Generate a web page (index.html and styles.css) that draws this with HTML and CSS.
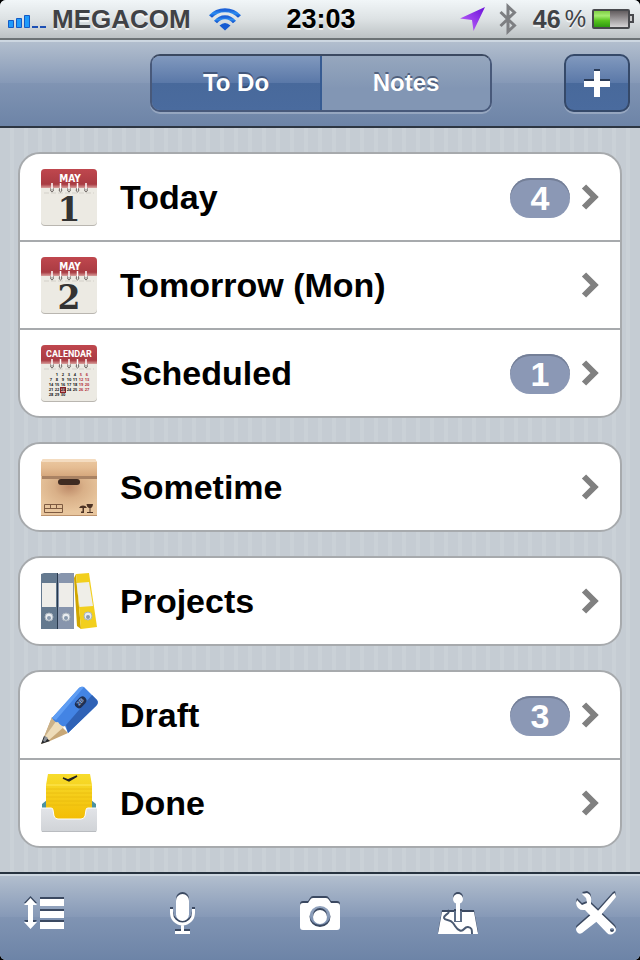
FILE: index.html
```html
<!DOCTYPE html>
<html lang="en">
<head>
<meta charset="utf-8">
<meta name="viewport" content="width=device-width, initial-scale=1">
<title>To Do</title>
<link rel="stylesheet" href="styles.css">
</head>
<body>
<svg class="defs" aria-hidden="true">
  <defs>
    <linearGradient id="red" x1="0" y1="0" x2="0" y2="1"><stop offset="0" stop-color="#c0474e"/><stop offset=".8" stop-color="#a93b42"/><stop offset="1" stop-color="#d9a09d"/></linearGradient>
    <linearGradient id="blue" x1="0" y1="0" x2="0" y2="1"><stop offset="0" stop-color="#1d62d8"/><stop offset=".5" stop-color="#2b8df2"/><stop offset="1" stop-color="#1558cf"/></linearGradient>
    <linearGradient id="purple" x1="1" y1="0" x2="0" y2="1"><stop offset="0" stop-color="#6a10d8"/><stop offset="1" stop-color="#c66cff"/></linearGradient>
    <linearGradient id="charge" x1="0" y1="0" x2="0" y2="1"><stop offset="0" stop-color="#7fcf45"/><stop offset=".3" stop-color="#a5ec70"/><stop offset=".6" stop-color="#58c41e"/><stop offset="1" stop-color="#2f9a10"/></linearGradient>
    <linearGradient id="empty" x1="0" y1="0" x2="0" y2="1"><stop offset="0" stop-color="#5c5658"/><stop offset="1" stop-color="#dcdadc"/></linearGradient>
    <radialGradient id="card" cx=".5" cy=".3" r=".6"><stop offset="0" stop-color="#bd8a68"/><stop offset=".45" stop-color="#d9b088"/><stop offset="1" stop-color="#e8c69e"/></radialGradient>
    <linearGradient id="flap" x1="0" y1="0" x2="0" y2="1"><stop offset="0" stop-color="#ecc9a2"/><stop offset=".5" stop-color="#e5bd93"/><stop offset="1" stop-color="#d6a87d"/></linearGradient>
    <linearGradient id="yellow" x1="0" y1="0" x2="0" y2="1"><stop offset="0" stop-color="#f7dc2c"/><stop offset="1" stop-color="#f3bd05"/></linearGradient>
    <linearGradient id="tray" x1="0" y1="0" x2="0" y2="1"><stop offset="0" stop-color="#e2e4e8"/><stop offset="1" stop-color="#d0d3d7"/></linearGradient>
    <g id="sheet">
      <rect x="1" y="1" width="56" height="57" rx="4" fill="#b9b6b0"/>
      <rect x="1" y="1" width="56" height="56" rx="4" fill="#eceae3"/>
      <path d="M1 20V5a4 4 0 0 1 4-4h48a4 4 0 0 1 4 4v15z" fill="url(#red)"/>
      <path d="M4 25h50" stroke="#d3d0c9" stroke-dasharray="5 2"/>
    </g>
    <g id="rings" fill="none">
      <g stroke="#6d6663"><path d="M11 20q-1 4 1 4t1-4M19.500 20q-1 4 1 4t1-4M28 20q-1 4 1 4t1-4M36.500 20q-1 4 1 4t1-4M45 20q-1 4 1 4t1-4"/></g>
      <path d="M12 15v6M20.500 15v6M29 15v6M37.500 15v6M46 15v6" stroke="#fff" stroke-width="1.500"/>
    </g>
  </defs>
</svg>
<div class="app">
  <div class="status">
    <div class="side">
      <svg class="signal" width="38" height="14" viewBox="0 0 38 14" role="img" aria-label="Signal"><g fill="#1f9bfb" stroke="#155ac4"><path d="M.5 5.500h5v7h-5zM8.500 3.500h5v9h-5zM16.500 .5h5v12h-5z"/></g><path d="M24 11h6v2h-6zM32 11h6v2h-6z" fill="#1c4fb4"/></svg>
      <span class="carrier">MEGACOM</span>
      <svg class="wifi" width="32" height="24" viewBox="0 0 32 24" role="img" aria-label="Wi-Fi"><g fill="none" stroke="url(#blue)" stroke-width="4"><path d="M1.500 9.500C9 1 23 1 30.500 9.500"/><path d="M6.500 15C12 8.500 20 8.500 25.500 15"/></g><path d="M10.500 18.500q5.500-5 11 0L16 23.500z" fill="#155bd2"/></svg>
    </div>
    <span class="time">23:03</span>
    <div class="side end">
      <svg width="26" height="26" viewBox="0 0 26 26" role="img" aria-label="Location"><path d="M25 1 13.500 25 12 14 0 12.500z" fill="url(#purple)"/></svg>
      <svg class="bluetooth" width="18" height="30" viewBox="0 0 18 30" role="img" aria-label="Bluetooth"><path d="M1.500 8 15.500 21.500 9 27.500V2.500l6.500 6L1.500 22" fill="none" stroke="#7d7f82" stroke-width="3"/></svg>
      <span class="percent"><span>46</span><span class="sign">%</span></span>
      <svg width="42" height="20" viewBox="0 0 42 20" role="img" aria-label="Battery"><rect x="1" y="1" width="36" height="18" rx="1" fill="url(#empty)" stroke="#48494d" stroke-width="2"/><path d="M2 2h16v16H2z" fill="url(#charge)"/><path d="M38 6h3v7h-3" fill="#ccc" stroke="#48494d" stroke-width="2"/></svg>
    </div>
  </div>
  <header class="nav">
    <div class="segments">
      <button class="segment active" type="button">To Do</button>
      <button class="segment" type="button">Notes</button>
    </div>
    <button class="add" type="button" aria-label="Add"><svg width="26" height="28" viewBox="0 0 26 28"><path d="M10 0h6v10h10v6H16v10h-6V16H0v-6h10z" fill="#2b3c58"/><path d="M10 2h6v10h10v6H16v10h-6V18H0v-6h10z" fill="#fff"/></svg></button>
  </header>
  <main class="lists">
    <div class="group">
      <a class="row" href="#today">
        <svg class="icon" viewBox="0 0 58 58" aria-hidden="true"><use href="#sheet"/><text class="month" x="30" y="14">MAY</text><use href="#rings"/><text class="day" x="29" y="53">1</text></svg>
        <span class="label">Today</span><span class="badge">4</span>
        <svg class="chevron" viewBox="0 0 18 26"><path d="M2 2.500 12.500 13 2 23.500" /></svg>
      </a>
      <a class="row" href="#tomorrow">
        <svg class="icon" viewBox="0 0 58 58" aria-hidden="true"><use href="#sheet"/><text class="month" x="30" y="14">MAY</text><use href="#rings"/><text class="day" x="29" y="53">2</text></svg>
        <span class="label">Tomorrow (Mon)</span>
        <svg class="chevron" viewBox="0 0 18 26"><path d="M2 2.500 12.500 13 2 23.500" /></svg>
      </a>
      <a class="row" href="#scheduled">
        <svg class="icon" viewBox="0 0 58 58" aria-hidden="true"><use href="#sheet"/><text class="month wide" x="29" y="13">CALENDAR</text><use href="#rings"/>
          <rect x="20.500" y="43.500" width="5" height="5" fill="#d99a9a" stroke="#8b2026"/>
          <g class="dates"><text x="17" y="32">1</text><text x="23" y="32">2</text><text x="29" y="32">3</text><text x="35" y="32">4</text><text class="off" x="41" y="32">5</text><text class="off" x="47" y="32">6</text>
          <text x="11" y="37">7</text><text x="17" y="37">8</text><text x="23" y="37">9</text><text x="29" y="37">10</text><text x="35" y="37">11</text><text class="off" x="41" y="37">12</text><text class="off" x="47" y="37">13</text>
          <text x="11" y="42">14</text><text x="17" y="42">15</text><text x="23" y="42">16</text><text x="29" y="42">17</text><text x="35" y="42">18</text><text class="off" x="41" y="42">19</text><text class="off" x="47" y="42">20</text>
          <text x="11" y="47">21</text><text x="17" y="47">22</text><text x="23" y="47">23</text><text x="29" y="47">24</text><text x="35" y="47">25</text><text class="off" x="41" y="47">26</text><text class="off" x="47" y="47">27</text>
          <text x="11" y="52">28</text><text x="17" y="52">29</text><text x="23" y="52">30</text></g></svg>
        <span class="label">Scheduled</span><span class="badge">1</span>
        <svg class="chevron" viewBox="0 0 18 26"><path d="M2 2.500 12.500 13 2 23.500" /></svg>
      </a>
    </div>
    <div class="group">
      <a class="row" href="#sometime">
        <svg class="icon" viewBox="0 0 58 58" aria-hidden="true"><path d="M1 16h56v42H1z" fill="url(#card)"/><path d="M1 57.500h56" stroke="#bd936e"/><path d="M3 1h52l2 3v14H1V4z" fill="url(#flap)"/><path d="M3 1h52l2 3H1z" fill="#f4dcc0"/><path d="M2 18h55v3H2z" fill="#a98263"/><rect x="18" y="21" width="22" height="6" rx="3" fill="#3f2b22"/><g fill="none" stroke="#7d5a41"><path d="M4.500 46.500h18v8h-18zM4.500 50.500h18M10.500 46.500v4M16.500 46.500v4"/></g><path d="M39 50a4.500 4.500 0 0 1 8 0zM42.500 49h1.500v6h-3v-1.500h1.500zM46.500 46h6.500q-.5 4-2.500 4v4h2.500v1h-6v-1h2.500v-4q-2.500 0-3-4z" fill="#4d3325"/></svg>
        <span class="label">Sometime</span>
        <svg class="chevron" viewBox="0 0 18 26"><path d="M2 2.500 12.500 13 2 23.500" /></svg>
      </a>
    </div>
    <div class="group">
      <a class="row" href="#projects">
        <svg class="icon" viewBox="0 0 58 58" aria-hidden="true"><path d="M1 2 4 1h13v56H1z" fill="#64798f"/><path d="M17 1h1v56h-1z" fill="#27384c"/><path d="M18 2 21 1h13v56H18z" fill="#8795ad"/><path d="M2 11h14v24H2zM19 11h14v24H19z" fill="#eeede9"/><path d="m34 6 2-4 5 55-4-3z" fill="#d1a600"/><path d="m36 2 13-1 8 54-16 2z" fill="#f2cf1d"/><path d="m36.500 11 12.500-1 4 24-13.500 1z" fill="#efeee8"/><g fill="#e8ecf0" stroke="#aab4be"><circle cx="9" cy="45" r="4"/><circle cx="26" cy="45" r="4"/><circle cx="48" cy="44" r="4"/></g><g fill="#8799ad"><circle cx="9" cy="46" r="2"/><circle cx="26" cy="46" r="2"/><circle cx="48" cy="45" r="2"/></g></svg>
        <span class="label">Projects</span>
        <svg class="chevron" viewBox="0 0 18 26"><path d="M2 2.500 12.500 13 2 23.500" /></svg>
      </a>
    </div>
    <div class="group">
      <a class="row" href="#draft">
        <svg class="icon" viewBox="0 0 58 58" aria-hidden="true"><path d="m12 31 16 16-18 8-9 3 3-7z" fill="#c8a878"/><path d="m12 31 6 4L5 53l-1-2z" fill="#cbb188"/><path d="m17 34 8 6L8 55l-4-3z" fill="#eedcb9"/><path d="m4 50 6 5-9 3z" fill="#25282e"/><path d="m5 50 3 2-3 4-2-1z" fill="#8a9098"/><path d="M39 2q2-2 5-1l13 13q2 3-1 6L28 47l-3-7q-4 1-7-4-3 1-6-4z" fill="#4384e4"/><path d="M39 2q2-2 5-1L16 34l-4-2z" fill="#5e9df3"/><path d="m52 9 5 5q2 3-1 6L28 47l-2-8z" fill="#2f62b6"/><rect x="34" y="12" width="13" height="8" rx="4" transform="rotate(-47 41 16)" fill="#203052"/><text class="grade" transform="translate(39 20) rotate(-47)">2B</text></svg>
        <span class="label">Draft</span><span class="badge">3</span>
        <svg class="chevron" viewBox="0 0 18 26"><path d="M2 2.500 12.500 13 2 23.500" /></svg>
      </a>
      <a class="row" href="#done">
        <svg class="icon" viewBox="0 0 58 58" aria-hidden="true"><path d="m2 30 5-4h44l5 4v8H2z" fill="#4c92a0"/><path d="M8 0h42l2 11v34H6V11z" fill="url(#yellow)"/><path d="M6 11h46" stroke="#ffe95a"/><path d="M6 15h46M6 19h46M6 23h46M6 27h46M6 31h46" stroke="#e5b60c" opacity=".6"/><path d="m23 4 5 2 9-4-8 5z" fill="#222" stroke="#222" stroke-width="1.500"/><path d="M1 34h10q2 0 2 2l1 6q1 3 4 3h23q3 0 4-3l1-6q0-2 2-2h9v22q0 2-2 2H3q-2 0-2-2z" fill="url(#tray)"/><path d="M1 34h10q2 0 2 2l1 6q1 3 4 3h23q3 0 4-3l1-6q0-2 2-2h9" fill="none" stroke="#fff"/><path d="M2 57.500h54" stroke="#b9bcc0"/></svg>
        <span class="label">Done</span>
        <svg class="chevron" viewBox="0 0 18 26"><path d="M2 2.500 12.500 13 2 23.500" /></svg>
      </a>
    </div>
  </main>
  <nav class="tools" aria-label="Tools">
    <button type="button" aria-label="Sort"><svg viewBox="0 0 44 44"><path d="M8.500 6 15 13h-4v17h4l-6.500 7L2 30h4V13H2zM18 7h24v7H18zM18 19h24v7H18zM18 30h24v7H18z"/></svg></button>
    <button type="button" aria-label="Record"><svg viewBox="0 0 44 44"><rect x="16" y="2" width="13" height="27" rx="6.500"/><path d="M11.500 17v4a11 11 0 0 0 22 0v-4M22.500 32v8" fill="none" stroke="#fff" stroke-width="3"/><path d="M15 39h15v3H15z"/></svg></button>
    <button type="button" aria-label="Camera"><svg viewBox="0 0 44 44"><path fill-rule="evenodd" d="M5 11h5l2-3q1-2 3-2h13q2 0 3 2l2 3h6q3 0 3 3v21q0 3-3 3H5q-3 0-3-3V14q0-3 3-3zm17 3a10.500 10.500 0 1 0 0 21 10.500 10.500 0 0 0 0-21z"/><circle cx="22" cy="25" r="7"/></svg></button>
    <button type="button" aria-label="Map"><svg viewBox="0 0 44 44"><path d="M6 20h32l4 22H2z"/><path d="M13 20c-2 3-5 3-5 6 1 3 6 1 9 5s3 6 7 7.500 4-4 8-3.500 4 3 4 7" fill="none" stroke="#4a5a72" stroke-width="2"/><path d="M18 19h8v11h-8z" fill="#5d6e87"/><path d="M20 10h4v19h-4z"/><circle cx="22" cy="7" r="5"/></svg></button>
    <button type="button" aria-label="Settings"><svg viewBox="0 0 44 44"><path fill-rule="evenodd" d="m8 2 5-1q5 2 4 8l0 3 23 22q4 4 0 7t-7 0L11 18q-8 1-9-7l1-3 5 5 5-2-1-5zM38 36a2 2 0 1 0 0 4 2 2 0 0 0 0-4z"/><path d="m18 26 4-5 4 4-4 4z" fill="#4a5a72"/><path d="M41 1l1 4-15 18-1 4L8 41q-3 2-5-1t0-5l16-14 4-1L39 2z"/></svg></button>
  </nav>
</div>
</body>
</html>
```
FILE: styles.css
```css
* { box-sizing: border-box; }
body { margin: 0; font-family: "Liberation Sans", Arial, sans-serif; font-weight: bold; background: #000; }
button { font: inherit; color: inherit; border: 0; padding: 0; background: none; }
svg { display: block; flex: none; overflow: visible; }
.defs { position: absolute; width: 0; height: 0; }
.app {
  min-height: 100vh; display: flex; flex-direction: column; overflow: hidden;
  border-radius: 6px;
  background: repeating-linear-gradient(90deg, #c5ccd3 0 10px, #cad1d7 10px 14px);
}
.status {
  height: 40px; display: grid; grid-template-columns: 1fr auto 1fr; align-items: center;
  padding: 0 6px 0 8px; color: #404246; font-size: 26px;
  background: linear-gradient(#f1f6f8, #dde2e4 50%, #bcc2c4);
  border-bottom: 2px solid #6c7375; text-shadow: 0 2px 0 rgba(255, 255, 255, .7);
}
.side { display: flex; align-items: center; }
.signal { margin: 6px 6px 0 0; }
.wifi { margin-left: 18px; }
.end { justify-content: flex-end; }
.time { color: #000; font-size: 27px; }
.bluetooth { margin: 0 16px 0 13px; }
.percent { display: flex; gap: 4px; margin-right: 6px; font-size: 25px; }
.sign { font-weight: normal; font-size: 24px; }
.nav {
  height: 88px; display: grid; grid-template-columns: 1fr 342px 1fr; align-items: start;
  padding: 14px 10px 0 12px; border-bottom: 2px solid #2d3642;
  background: linear-gradient(#b4c0cf, #8699b7 50%, #8094b3 50%, #6d84a7);
  box-shadow: inset 0 2px 0 #cdd7e1;
}
.segments {
  grid-column: 2; height: 58px; display: flex; overflow: hidden;
  border: 2px solid #48597a; border-top-color: #3b4961; border-radius: 10px;
  box-shadow: 0 2px 0 rgba(255, 255, 255, .25);
}
.segment { flex: 1; color: #fff; font-size: 24px; text-shadow: 0 -2px 0 rgba(45, 60, 90, .65); background: linear-gradient(#96a7be, #8296b4 60%, #8296b4); }
.segment.active, .add { background: linear-gradient(#8199be, #5a78a8 50%, #48699b 50%, #4a6b9e); }
.segment.active { border-right: 2px solid #365b92; }
.add {
  grid-column: 3; justify-self: end; width: 66px; height: 58px; display: grid; place-items: center;
  border: 2px solid #354969; border-radius: 10px; box-shadow: 0 2px 0 rgba(255, 255, 255, .25);
}
.lists { flex: 1; display: flex; flex-direction: column; gap: 24px; padding: 24px 18px; }
.group { background: #fff; border: 2px solid #a7aaad; border-radius: 22px; overflow: hidden; }
.row { height: 86px; display: flex; align-items: center; padding: 0 20px; color: #000; text-decoration: none; }
.row + .row { height: 88px; border-top: 2px solid #a7aaad; }
.icon { width: 58px; height: 58px; }
.label { flex: 1; margin-left: 22px; font-size: 34px; line-height: 40px; }
.badge {
  width: 60px; height: 40px; border-radius: 20px; margin: 2px 12px 0 0;
  color: #fff; background: #8b98b5; font-size: 34px; line-height: 40px; text-align: center;
  box-shadow: inset 0 2px 0 #747f97;
}
.chevron { width: 18px; height: 26px; fill: none; stroke: #808080; stroke-width: 6; }
.month { font: bold 10px "DejaVu Sans Condensed", "DejaVu Sans", sans-serif; fill: #fff; text-anchor: middle; }
.month.wide { font: bold 9px Roboto, sans-serif; }
.day { font: bold 33px "DejaVu Serif", serif; fill: #333; text-anchor: middle; }
.dates { font: bold 4px "Open Sans", sans-serif; fill: #222; text-anchor: middle; }
.off { fill: #b3343b; }
.grade { font-size: 6px; fill: #9ab3dd; }
.tools {
  height: 88px; display: flex; justify-content: space-between; align-items: flex-start;
  padding: 18px 22px 0; border-top: 2px solid #273340;
  background: linear-gradient(#b4c0cf, #8699b7 50%, #8094b3 50%, #6d84a7);
  box-shadow: inset 0 2px 0 #cdd7e1;
}
.tools svg { width: 44px; height: 44px; fill: #fff; filter: drop-shadow(0 -2px 0 #3b4961); }
```
